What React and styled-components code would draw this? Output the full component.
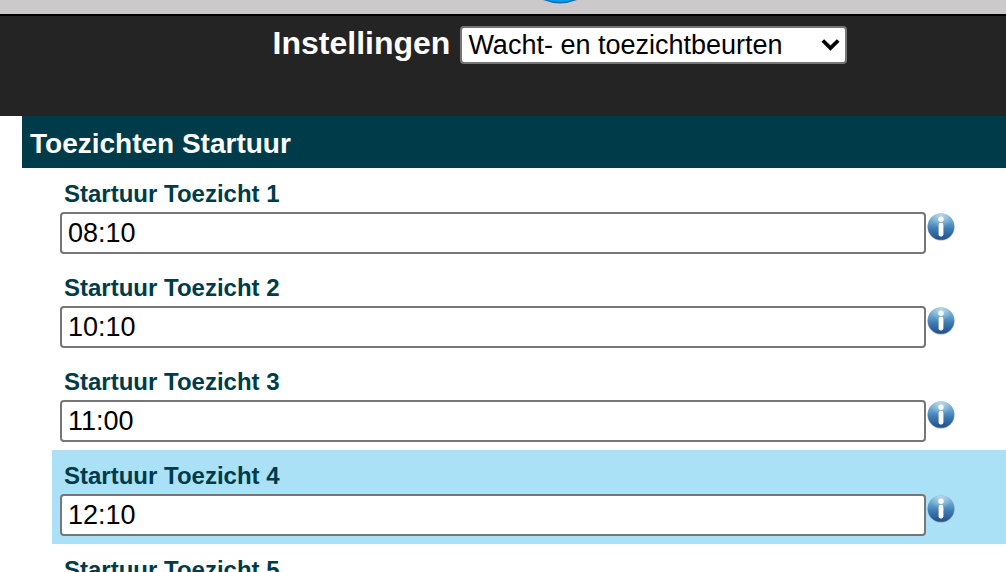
import React from "react";
import styled, { createGlobalStyle } from "styled-components";

const GlobalStyle = createGlobalStyle`
  html { scrollbar-width: none; }
  body {
    margin: 0;
    background: #fff;
    font-family: Arial, "Liberation Sans", sans-serif;
  }
  *, *::before, *::after { box-sizing: border-box; }
`;

const TopBar = styled.header`
  display: flex;
  justify-content: center;
  height: 16px;
  padding-left: 114px;
  overflow: hidden;
  background: #cbc9ca;
  border-bottom: 2px solid #000;
`;

const LogoEdge = styled.svg`
  display: block;
  flex: none;
`;

const TitleBar = styled.div`
  display: flex;
  justify-content: center;
  align-items: flex-start;
  gap: 10px;
  height: 100px;
  padding: 10px 0 0 114px;
  background: #242424;
`;

const Title = styled.label`
  color: #fff;
  font-size: 32px;
  font-weight: bold;
  line-height: 34px;
`;

const SelectWrap = styled.div`
  position: relative;
  width: 387px;
`;

const Select = styled.select`
  appearance: none;
  display: block;
  width: 100%;
  height: 38px;
  padding: 0 36px 0 6px;
  border: 2px solid #767676;
  border-radius: 4px;
  background: #fff;
  color: #000;
  font-family: inherit;
  font-size: 27px;
  line-height: 34px;
`;

const Chevron = styled.svg`
  position: absolute;
  top: 12px;
  right: 7px;
  pointer-events: none;
`;

const Section = styled.section`
  padding-left: 22px;
`;

const SectionTitle = styled.h2`
  margin: 0;
  padding: 12px 8px 8px;
  background: #003b4a;
  color: #fff;
  font-size: 28px;
  line-height: 32px;
`;

const Rows = styled.div`
  padding-left: 30px;
`;

const Row = styled.div`
  padding: 12px 50px 8px 8px;
  background: ${(p) => (p.$active ? "#abe1f7" : "transparent")};
`;

const RowLabel = styled.label`
  display: block;
  padding: 0 4px 4px;
  color: #003b4a;
  font-size: 24px;
  font-weight: bold;
  line-height: 28px;
`;

const Field = styled.div`
  display: flex;
  align-items: flex-start;
`;

const TextInput = styled.input`
  flex: 1;
  min-width: 0;
  height: 42px;
  padding: 0 6px;
  border: 2px solid #767676;
  border-radius: 4px;
  background: #fff;
  color: #000;
  font-family: inherit;
  font-size: 27px;
`;

const InfoButton = styled.button`
  flex: none;
  display: block;
  padding: 0;
  border: 0;
  background: none;
`;

const InfoSvg = styled.svg`
  display: block;
`;

function InfoIcon() {
  return (
    <InfoSvg width="30" height="30" viewBox="0 0 30 30" aria-hidden="true">
      <defs>
        <linearGradient id="ball" x1="0" y1="0" x2="0" y2="1">
          <stop offset="0" stopColor="#8fc0dc" />
          <stop offset="0.3" stopColor="#6aa6cf" />
          <stop offset="0.6" stopColor="#3d7ab2" />
          <stop offset="1" stopColor="#204f8c" />
        </linearGradient>
        <radialGradient id="shine" cx="0.5" cy="0.12" r="0.4">
          <stop offset="0" stopColor="#d3edf4" stopOpacity="0.6" />
          <stop offset="1" stopColor="#d3edf4" stopOpacity="0" />
        </radialGradient>
      </defs>
      <circle cx="15" cy="15.2" r="13.6" fill="#808890" opacity="0.5" />
      <circle cx="15" cy="14.5" r="13.3" fill="url(#ball)" />
      <circle cx="15" cy="14.5" r="13.3" fill="url(#shine)" />
      <circle cx="15" cy="7.2" r="2.7" fill="#fff" />
      <rect x="12.6" y="10.8" width="4.8" height="13.6" rx="2.2" fill="#fff" />
    </InfoSvg>
  );
}

const rows = [
  { n: 1, value: "08:10" },
  { n: 2, value: "10:10" },
  { n: 3, value: "11:00" },
  { n: 4, value: "12:10", active: true },
  { n: 5, value: "13:00" },
];

export default function App() {
  return (
    <>
      <GlobalStyle />
      <TopBar>
        <LogoEdge width="84" height="14" viewBox="0 0 84 14" aria-hidden="true">
          <circle cx="42" cy="-38.5" r="42" fill="#0a6fc0" />
          <circle cx="42" cy="-40" r="42" fill="#0a9bea" />
        </LogoEdge>
      </TopBar>
      <TitleBar>
        <Title htmlFor="settings">Instellingen</Title>
        <SelectWrap>
          <Select id="settings" defaultValue="wacht">
            <option value="wacht">Wacht- en toezichtbeurten</option>
          </Select>
          <Chevron width="19" height="14" viewBox="0 0 19 14" aria-hidden="true">
            <path d="M1.8 2.5 L9.5 10 L17.2 2.5" fill="none" stroke="#000" strokeWidth="3.8" />
          </Chevron>
        </SelectWrap>
      </TitleBar>
      <Section>
        <SectionTitle>Toezichten Startuur</SectionTitle>
        <Rows>
          {rows.map((r) => (
            <Row key={r.n} $active={r.active}>
              <RowLabel htmlFor={`start-${r.n}`}>Startuur Toezicht {r.n}</RowLabel>
              <Field>
                <TextInput id={`start-${r.n}`} type="text" defaultValue={r.value} />
                <InfoButton type="button" aria-label={`Info Startuur Toezicht ${r.n}`}>
                  <InfoIcon />
                </InfoButton>
              </Field>
            </Row>
          ))}
        </Rows>
      </Section>
    </>
  );
}
